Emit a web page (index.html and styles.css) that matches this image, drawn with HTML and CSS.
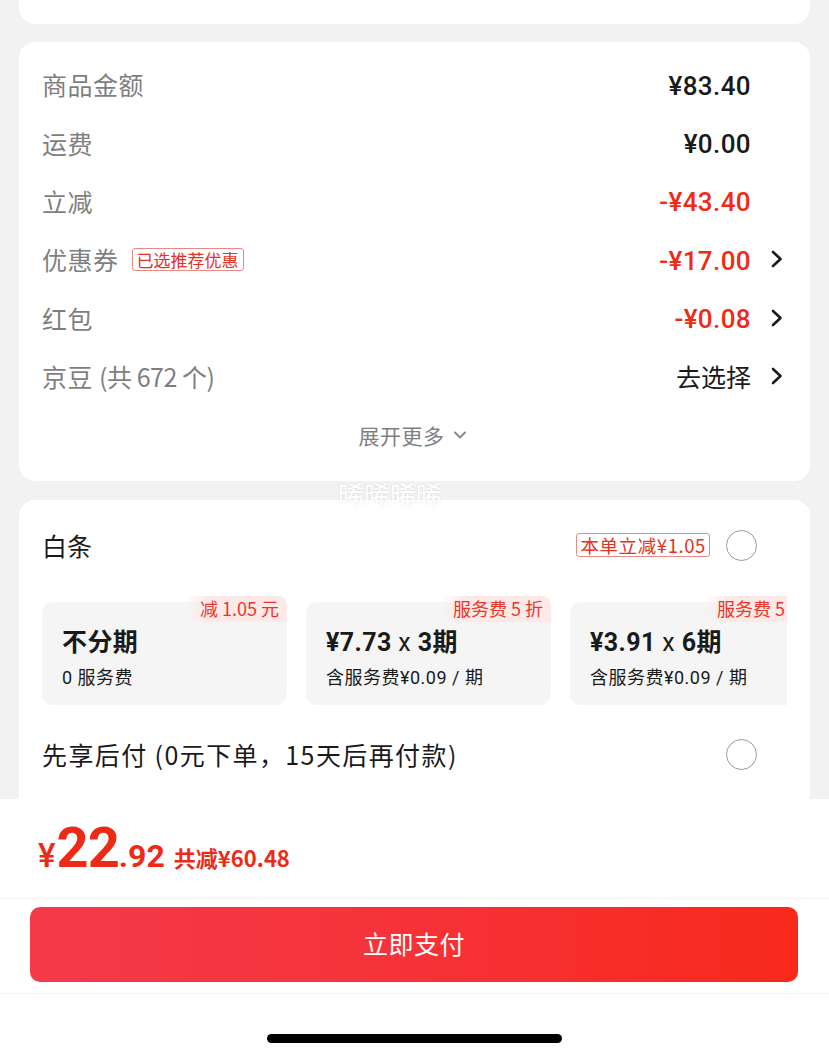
FILE: index.html
```html
<!DOCTYPE html>
<html lang="zh-CN">
<head>
<meta charset="utf-8">
<title>支付</title>
<link rel="stylesheet" href="styles.css">
</head>
<body>
<div class="page">
  <div class="card stub"></div>

  <div class="card summary">
    <div class="row">
      <span class="label">商品金额</span>
      <span class="value">¥83.40</span>
      <span class="arrow-slot"></span>
    </div>
    <div class="row">
      <span class="label">运费</span>
      <span class="value">¥0.00</span>
      <span class="arrow-slot"></span>
    </div>
    <div class="row">
      <span class="label">立减</span>
      <span class="value red">-¥43.40</span>
      <span class="arrow-slot"></span>
    </div>
    <div class="row">
      <span class="label">优惠券</span>
      <span class="tag">已选推荐优惠</span>
      <span class="value red">-¥17.00</span>
      <span class="arrow-slot"><svg class="chev" viewBox="0 0 12 18" width="12" height="18"><path d="M2 2 L9.5 9 L2 16" fill="none" stroke="#1a1a1a" stroke-width="2.6" stroke-linecap="round" stroke-linejoin="round"/></svg></span>
    </div>
    <div class="row">
      <span class="label">红包</span>
      <span class="value red">-¥0.08</span>
      <span class="arrow-slot"><svg class="chev" viewBox="0 0 12 18" width="12" height="18"><path d="M2 2 L9.5 9 L2 16" fill="none" stroke="#1a1a1a" stroke-width="2.6" stroke-linecap="round" stroke-linejoin="round"/></svg></span>
    </div>
    <div class="row">
      <span class="label">京豆 <span class="light">(共 672 个)</span></span>
      <span class="value cjk">去选择</span>
      <span class="arrow-slot"><svg class="chev" viewBox="0 0 12 18" width="12" height="18"><path d="M2 2 L9.5 9 L2 16" fill="none" stroke="#1a1a1a" stroke-width="2.6" stroke-linecap="round" stroke-linejoin="round"/></svg></span>
    </div>
    <div class="more">
      <span>展开更多</span>
      <svg viewBox="0 0 14 10" width="14" height="10"><path d="M2 2.5 L7 7.5 L12 2.5" fill="none" stroke="#8a8a8a" stroke-width="2" stroke-linecap="round" stroke-linejoin="round"/></svg>
    </div>
  </div>

  <div class="watermark">晞晞晞晞</div>

  <div class="card pay">
    <div class="pay-row">
      <span class="pay-name">白条</span>
      <span class="tag big">本单立减¥1.05</span>
      <span class="radio"></span>
    </div>
    <div class="plans">
      <div class="plan">
        <span class="badge">减 1.05 元</span>
        <div class="plan-title">不分期</div>
        <div class="plan-sub">0 服务费</div>
      </div>
      <div class="plan">
        <span class="badge">服务费 5 折</span>
        <div class="plan-title">¥7.73 <span class="x">x</span> 3期</div>
        <div class="plan-sub">含服务费¥0.09 / 期</div>
      </div>
      <div class="plan">
        <span class="badge">服务费 5 折</span>
        <div class="plan-title">¥3.91 <span class="x">x</span> 6期</div>
        <div class="plan-sub">含服务费¥0.09 / 期</div>
      </div>
    </div>
    <div class="pay-row later">
      <span class="pay-name wide">先享后付 (0元下单，15天后再付款)</span>
      <span class="radio"></span>
    </div>
  </div>

  <div class="footer">
    <div class="total">
      <span class="yen">¥</span><span class="int">22</span><span class="dec">.92</span>
      <span class="saved">共减¥60.48</span>
    </div>
    <div class="btn-bar">
      <div class="btn">立即支付</div>
    </div>
    <div class="home-bar"><span class="indicator"></span></div>
  </div>
</div>
</body>
</html>
```

FILE: styles.css
```css
* { box-sizing: border-box; }

html, body {
  margin: 0;
  padding: 0;
}

body {
  width: 829px;
  height: 1059px;
  overflow: hidden;
  background: #f2f2f2;
  font-family: "Noto Sans CJK SC", "Noto Sans", sans-serif;
  color: #1a1a1a;
}

.page {
  position: relative;
  width: 829px;
  height: 1059px;
  display: flex;
  flex-direction: column;
}

.card {
  background: #fff;
  margin: 0 19px;
  border-radius: 16px;
}

.stub {
  height: 24px;
  border-radius: 0 0 16px 16px;
}

.summary {
  margin-top: 18px;
  padding: 13px 27px 16px 23px;
}

.row {
  height: 58.4px;
  display: flex;
  align-items: center;
}

.label {
  font-size: 25px;
  color: #7f7f7f;
  letter-spacing: 0.5px;
}

.label .light {
  letter-spacing: -0.5px;
}

.value {
  margin-left: auto;
  padding-top: 3px;
  font-family: Roboto, "Noto Sans CJK SC", sans-serif;
  font-weight: 500;
  font-size: 26px;
  letter-spacing: 0.4px;
  color: #1a1a1a;
}

.value.cjk {
  padding-top: 0;
  font-family: "Noto Sans CJK SC", sans-serif;
  font-weight: 400;
  font-size: 25px;
  letter-spacing: 0;
}

.value.red { color: #ef2b16; }

.arrow-slot {
  width: 32px;
  display: flex;
  justify-content: flex-end;
  align-items: center;
}

.chev { display: block; }

.tag {
  margin-left: 13px;
  border: 1px solid #e88a82;
  border-radius: 3px;
  color: #e23224;
  font-size: 17px;
  line-height: 21px;
  padding: 0 4px;
}

.more {
  height: 60px;
  display: flex;
  justify-content: center;
  align-items: center;
  gap: 8px;
  color: #7f7f7f;
  font-size: 21px;
  padding-left: 0;
}

.more span { letter-spacing: 0.5px; }

.watermark {
  position: absolute;
  top: 477px;
  left: 338px;
  font-size: 26px;
  line-height: 34px;
  color: #fff;
  text-shadow: 0 0 2px rgba(0,0,0,0.12);
  z-index: 2;
}

.pay {
  margin-top: 19px;
  padding: 16px 23px 40px 23px;
  flex: 1;
  border-radius: 16px 16px 0 0;
}

.pay-row {
  height: 58px;
  display: flex;
  align-items: center;
}

.pay-name {
  font-size: 25px;
  color: #1a1a1a;
}

.pay-name.wide { letter-spacing: 1.4px; }

.pay-row .tag.big {
  margin-left: auto;
  font-size: 18.5px;
  line-height: 22px;
  padding: 0 3px;
  letter-spacing: 0.6px;
  border-color: #e58b84;
  color: #e23224;
}

.radio {
  width: 31px;
  height: 31px;
  border: 1.5px solid #9a9a9a;
  border-radius: 50%;
  margin-left: 16px;
  margin-right: 30px;
  flex-shrink: 0;
}

.later .radio { margin-left: auto; }

.plans {
  margin-top: 22px;
  padding-top: 6px;
  display: flex;
  gap: 19px;
  overflow: hidden;
}

.plan {
  position: relative;
  flex: 0 0 245px;
  height: 103px;
  background: #f5f5f5;
  border-radius: 11px;
  padding: 24px 0 0 20px;
}

.badge {
  position: absolute;
  top: -7px;
  right: 0;
  padding: 0 8px 0 14px;
  font-size: 18px;
  line-height: 27px;
  color: #e8352a;
  white-space: nowrap;
  background: linear-gradient(90deg, rgba(253,234,232,0) 0%, #fdeae8 22%, #fdeae8 100%);
  border-radius: 0 11px 0 11px;
}

.plan-title {
  font-size: 25px;
  line-height: 34px;
  font-weight: 700;
  color: #1a1a1a;
  font-family: Roboto, "Noto Sans CJK SC", sans-serif;
  letter-spacing: 0.4px;
}

.plan-title .x {
  font-weight: 400;
}

.plan-sub {
  margin-top: 6px;
  font-size: 18px;
  line-height: 24px;
  color: #1a1a1a;
  font-family: Roboto, "Noto Sans CJK SC", sans-serif;
  letter-spacing: 0.5px;
}

.later {
  margin-top: 20px;
}

.footer {
  position: absolute;
  left: 0;
  right: 0;
  top: 799px;
  bottom: 0;
  background: #fff;
  display: flex;
  flex-direction: column;
  z-index: 3;
}

.total {
  height: 99px;
  display: flex;
  align-items: baseline;
  padding: 21px 0 0 38px;
  color: #ee2a17;
  font-family: Roboto, sans-serif;
  font-weight: 700;
  line-height: 1;
}

.total .yen { font-size: 33px; font-weight: 500; margin-right: 1px; }
.total .int { font-size: 56px; letter-spacing: -1px; }
.total .dec { font-size: 32px; }
.total .saved {
  font-size: 22px;
  margin-left: 9px;
  font-family: "Noto Sans CJK SC", Roboto, sans-serif;
  font-weight: 700;
}

.btn-bar {
  height: 96px;
  border-top: 1px solid #f4f4f4;
  border-bottom: 1px solid #f4f4f4;
  padding: 8px 31px 0 30px;
}

.btn {
  height: 75px;
  border-radius: 10px;
  background: linear-gradient(90deg, #f43a4a 0%, #f63238 50%, #f8291b 100%);
  color: #fff;
  font-size: 25px;
  display: flex;
  justify-content: center;
  align-items: center;
  letter-spacing: 0.5px;
  padding-bottom: 3px;
}

.home-bar {
  flex: 1;
  display: flex;
  justify-content: center;
  padding-top: 40px;
}

.indicator {
  width: 295px;
  height: 9px;
  border-radius: 5px;
  background: #000;
}
```
